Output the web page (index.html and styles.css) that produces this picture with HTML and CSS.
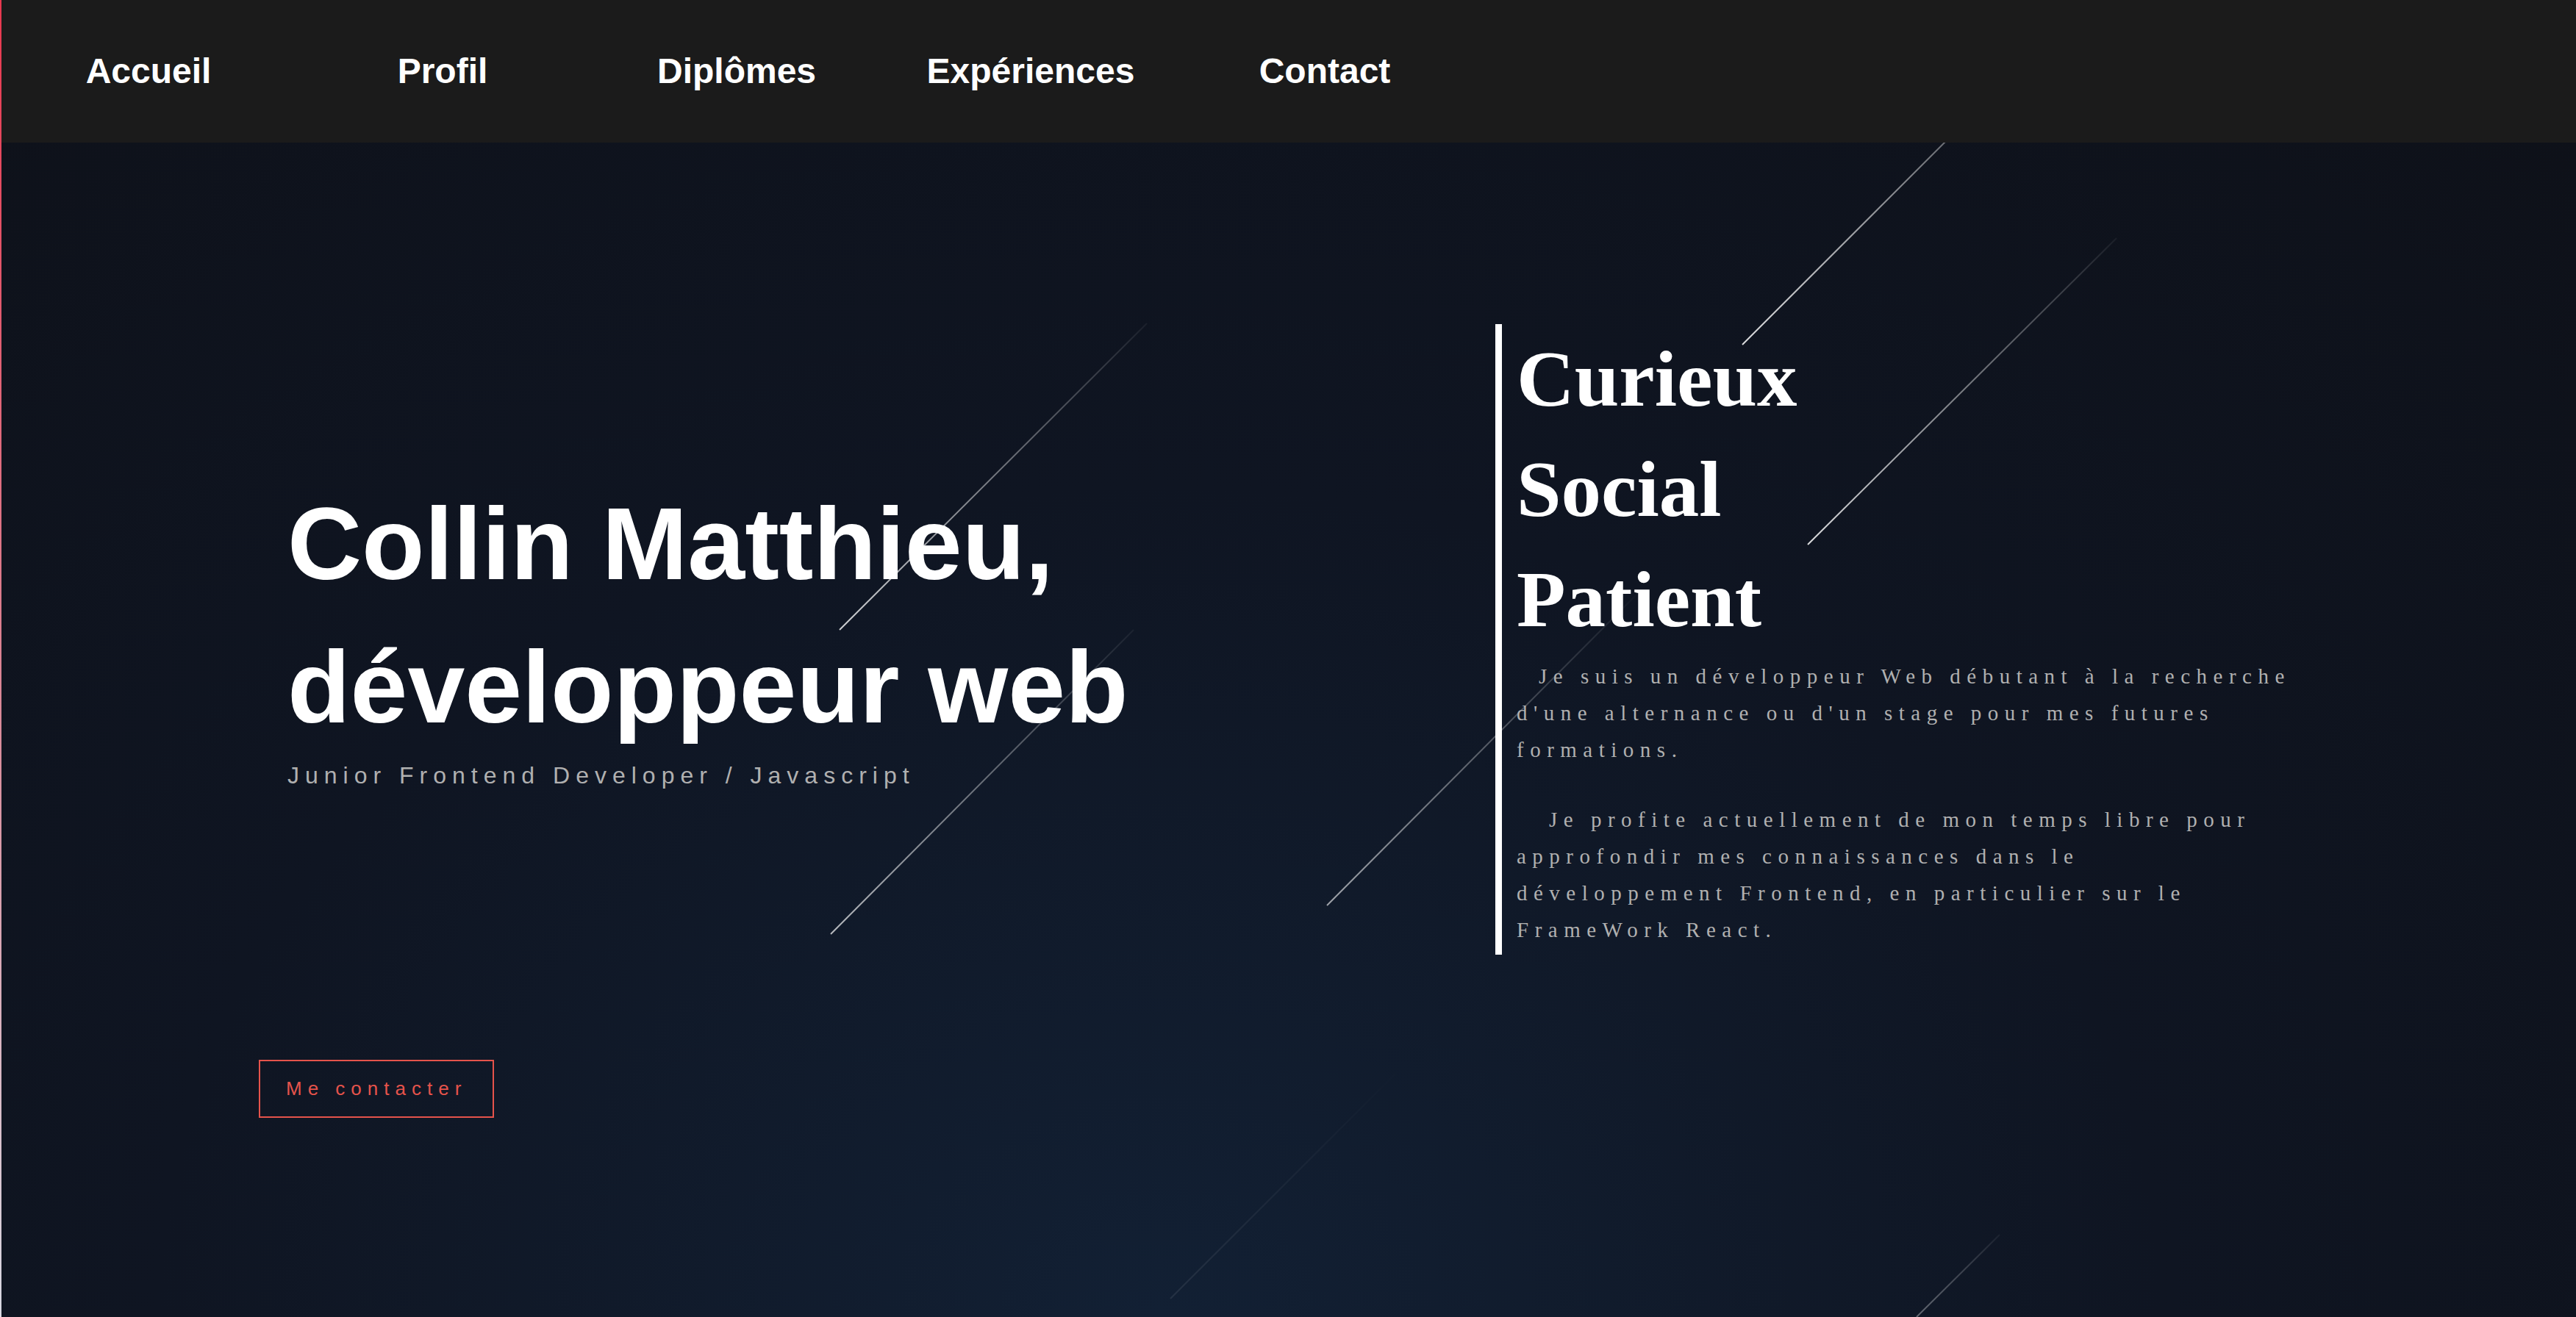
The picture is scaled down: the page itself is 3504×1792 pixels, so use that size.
FILE: index.html
```html
<!DOCTYPE html>
<html lang="fr">
<head>
<meta charset="utf-8">
<title>Collin Matthieu</title>
<link rel="stylesheet" href="styles.css">
</head>
<body>
  <nav class="nav">
    <a class="nav-link" href="#">Accueil</a>
    <a class="nav-link" href="#">Profil</a>
    <a class="nav-link" href="#">Diplômes</a>
    <a class="nav-link" href="#">Expériences</a>
    <a class="nav-link" href="#">Contact</a>
  </nav>
  <main class="hero">
    <svg class="stars" viewBox="0 0 3502 1598" preserveAspectRatio="none" aria-hidden="true">
      <defs>
        <linearGradient id="s1" gradientUnits="userSpaceOnUse" x1="2368" y1="275" x2="2698" y2="-55">
          <stop offset="0" stop-color="#fff" stop-opacity="0.85"/>
          <stop offset="1" stop-color="#fff" stop-opacity="0.3"/>
        </linearGradient>
        <linearGradient id="s2" gradientUnits="userSpaceOnUse" x1="2457" y1="547" x2="2877" y2="130">
          <stop offset="0" stop-color="#fff" stop-opacity="0.85"/>
          <stop offset="1" stop-color="#fff" stop-opacity="0.05"/>
        </linearGradient>
        <linearGradient id="s3" gradientUnits="userSpaceOnUse" x1="1140" y1="663" x2="1558" y2="246">
          <stop offset="0" stop-color="#fff" stop-opacity="0.8"/>
          <stop offset="1" stop-color="#fff" stop-opacity="0.05"/>
        </linearGradient>
        <linearGradient id="s4" gradientUnits="userSpaceOnUse" x1="1128" y1="1077" x2="1540" y2="663">
          <stop offset="0" stop-color="#fff" stop-opacity="0.7"/>
          <stop offset="1" stop-color="#fff" stop-opacity="0.05"/>
        </linearGradient>
        <linearGradient id="s5" gradientUnits="userSpaceOnUse" x1="1803" y1="1038" x2="2233" y2="606">
          <stop offset="0" stop-color="#fff" stop-opacity="0.6"/>
          <stop offset="1" stop-color="#fff" stop-opacity="0"/>
        </linearGradient>
        <linearGradient id="s6" gradientUnits="userSpaceOnUse" x1="1590" y1="1573" x2="1907" y2="1256">
          <stop offset="0" stop-color="#fff" stop-opacity="0.08"/>
          <stop offset="1" stop-color="#fff" stop-opacity="0"/>
        </linearGradient>
        <linearGradient id="s7" gradientUnits="userSpaceOnUse" x1="2605" y1="1598" x2="2718" y2="1486">
          <stop offset="0" stop-color="#fff" stop-opacity="0.35"/>
          <stop offset="1" stop-color="#fff" stop-opacity="0.05"/>
        </linearGradient>
      </defs>
      <line x1="2368" y1="275" x2="2698" y2="-55" stroke="url(#s1)" stroke-width="2"/>
      <line x1="2457" y1="547" x2="2877" y2="130" stroke="url(#s2)" stroke-width="2"/>
      <line x1="1140" y1="663" x2="1558" y2="246" stroke="url(#s3)" stroke-width="2"/>
      <line x1="1128" y1="1077" x2="1540" y2="663" stroke="url(#s4)" stroke-width="2"/>
      <line x1="1803" y1="1038" x2="2233" y2="606" stroke="url(#s5)" stroke-width="2"/>
      <line x1="1590" y1="1573" x2="1907" y2="1256" stroke="url(#s6)" stroke-width="2"/>
      <line x1="2605" y1="1598" x2="2718" y2="1486" stroke="url(#s7)" stroke-width="2"/>
    </svg>

    <section class="hero-left">
      <div class="intro">
        <h1 class="title"><span class="title-line">Collin Matthieu,</span><span class="title-line">développeur web</span></h1>
        <p class="subtitle">Junior Frontend Developer / Javascript</p>
      </div>
      <a class="btn" href="#">Me contacter</a>
    </section>

    <section class="hero-right">
      <h2 class="trait">Curieux</h2>
      <h2 class="trait">Social</h2>
      <h2 class="trait">Patient</h2>
      <p class="about about-first">Je suis un développeur Web débutant à la recherche d'une alternance ou d'un stage pour mes futures formations.</p>
      <p class="about about-second">Je profite actuellement de mon temps libre pour approfondir mes connaissances dans le<br>développement Frontend, en particulier sur le FrameWork React.</p>
    </section>
  </main>
</body>
</html>
```

FILE: styles.css
```css
html, body {
  height: 100%;
  overflow: hidden;
}

body {
  margin: 0;
  box-sizing: border-box;
  border-left: 2px solid #e8374e;
  border-image: linear-gradient(to bottom, #e8374e 0%, #d98a99 55%, #d8d8e2 100%) 1;
  background: #0e1119;
  font-family: "Liberation Sans", Arial, sans-serif;
}

.nav {
  display: flex;
  align-items: center;
  height: 194px;
  background: #1b1b1b;
}

.nav-link {
  width: 400px;
  text-align: center;
  color: #ffffff;
  text-decoration: none;
  font: 700 48px/1.15 "Liberation Sans", Arial, sans-serif;
}

.hero {
  position: relative;
  display: flex;
  align-items: flex-start;
  height: calc(100vh - 194px);
  padding-left: 350px;
  box-sizing: border-box;
  overflow: hidden;
  background: radial-gradient(ellipse at 45% 100%, #122034 0%, #0f1522 50%, #0e1119 100%);
}

.stars {
  position: absolute;
  left: 0;
  top: 0;
  width: 100%;
  height: 100%;
  pointer-events: none;
}

.hero-left {
  position: relative;
  flex: 0 0 1682px;
  display: flex;
  flex-direction: column;
  align-items: flex-start;
  padding-top: 448px;
}

.intro {
  margin-left: 39px;
}

.title {
  margin: 0;
  color: #ffffff;
  font: 700 140px/195px "Liberation Sans", Arial, sans-serif;
}

.title-line {
  display: block;
  white-space: nowrap;
}

.subtitle {
  margin: 5px 0 0;
  color: #b0b0b0;
  font: 400 32px/1.15 "Liberation Sans", Arial, sans-serif;
  letter-spacing: 8px;
}

.btn {
  display: inline-block;
  margin-top: 368px;
  padding: 22.5px 35px;
  border: 2px solid #e5534b;
  color: #e5534b;
  text-decoration: none;
  font: 400 26px/30px "Liberation Sans", Arial, sans-serif;
  letter-spacing: 8px;
}

.hero-right {
  position: relative;
  margin-top: 247px;
  width: 1080px;
  border-left: 9px solid #ffffff;
  padding: 0 0 9px 20px;
}

.trait {
  margin: 0;
  color: #ffffff;
  font: 700 109px/150px "Liberation Serif", "Times New Roman", serif;
}

.about {
  margin: 0;
  color: #b0b0b0;
  font: 400 29px/50px "Liberation Serif", "Times New Roman", serif;
  letter-spacing: 8.5px;
}

.about-first {
  margin-top: 4px;
  text-indent: 30px;
}

.about-second {
  margin-top: 45px;
  text-indent: 44px;
}
```
